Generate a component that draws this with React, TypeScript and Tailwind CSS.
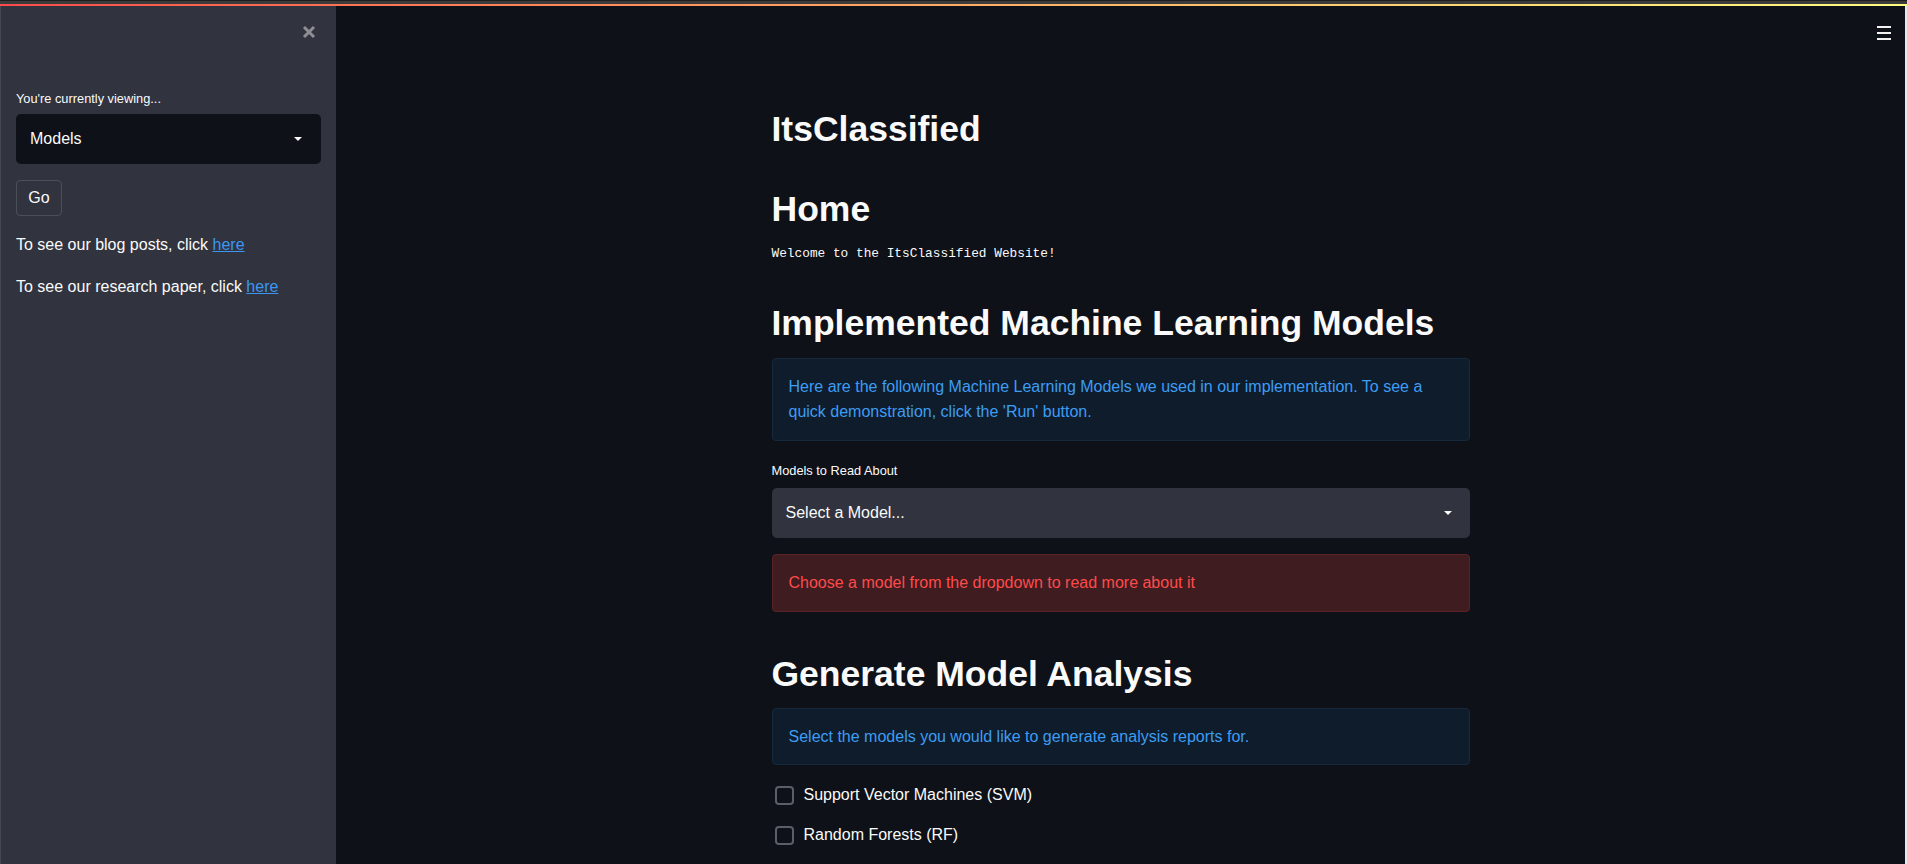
import React from 'react';

function Caret() {
  return (
    <svg width="8" height="4" viewBox="0 0 8 4" className="shrink-0">
      <path d="M0 0h8L4 4z" fill="#fafafa" />
    </svg>
  );
}

function Checkbox({ label }: { label: string }) {
  return (
    <label className="flex items-center h-[25.6px] gap-[10px] cursor-pointer">
      <span className="w-[19px] h-[19px] ml-[3px] rounded-[4px] border-2 border-[#5c5e67] shrink-0" />
      <span className="text-[16px] leading-[25.6px]">{label}</span>
    </label>
  );
}

export default function App() {
  return (
    <div className="h-[864px] w-full flex flex-col overflow-hidden bg-[#0e1117] text-[#fafafa] font-['Liberation_Sans',sans-serif]">
      <div className="h-px bg-[#1e1e1e]" />
      <div className="h-[3px] bg-[#3b3b3b]" />
      <div className="h-[2px] bg-linear-to-r from-[#ff4b4b] to-[#fffd80]" />

      <div className="flex flex-1 min-h-0">
        {/* sidebar */}
        <aside className="w-[336px] shrink-0 bg-[#31333f] border-l border-[#45474f] px-[15px] flex flex-col">
          <div className="flex justify-end mt-[19px] pr-[5px]">
            <svg width="14" height="14" viewBox="0 0 14 14">
              <path d="M2 2l10 10M12 2L2 12" stroke="#8e8f95" strokeWidth="3" strokeLinecap="butt" />
            </svg>
          </div>
          <div className="mt-[49.6px] text-[12.8px] leading-[20.48px]">You're currently viewing...</div>
          <div className="mt-[5px] h-[50px] rounded-[5px] bg-[#0e1117] flex items-center justify-between pl-[14px] pr-[19px]">
            <span className="text-[16px]">Models</span>
            <Caret />
          </div>
          <button className="mt-[16px] w-[46px] h-[36px] rounded-[4px] border border-[#4c4e58] text-[16px] flex items-center justify-center">
            Go
          </button>
          <p className="mt-[16.3px] text-[16px] leading-[25.6px]">
            To see our blog posts, click <a href="#" className="text-[#3a98f2] underline">here</a>
          </p>
          <p className="mt-[16px] text-[16px] leading-[25.6px]">
            To see our research paper, click <a href="#" className="text-[#3a98f2] underline">here</a>
          </p>
        </aside>

        {/* main */}
        <main className="flex-1 relative">
          <div className="absolute top-[20px] right-[14px] w-[14px] flex flex-col gap-[4px]">
            <span className="h-[2px] bg-[#f2f2f2]" />
            <span className="h-[2px] bg-[#f2f2f2]" />
            <span className="h-[2px] bg-[#f2f2f2]" />
          </div>

          <div className="w-[698px] mx-auto pt-[102px] flex flex-col">
            <h1 className="text-[35.5px] leading-[43.2px] font-bold">ItsClassified</h1>
            <h2 className="mt-[36.4px] text-[35.5px] leading-[43.2px] font-bold">Home</h2>
            <div className="mt-[12.8px] text-[12.8px] leading-[20px] font-['Liberation_Mono',monospace]">
              Welcome to the ItsClassified Website!
            </div>

            <h2 className="mt-[38px] text-[35.5px] leading-[43.2px] font-bold">Implemented Machine Learning Models</h2>
            <div className="mt-[13px] rounded-[4px] border border-[#17293d] bg-[#0f1c2b] px-4 py-[15px] text-[16px] leading-[25.6px] text-[#3d9df3]">
              Here are the following Machine Learning Models we used in our implementation. To see a quick
              demonstration, click the 'Run' button.
            </div>

            <div className="mt-[20px] text-[12.8px] leading-[20.48px]">Models to Read About</div>
            <div className="mt-[6.5px] h-[50px] rounded-[5px] bg-[#31333f] flex items-center justify-between pl-[14px] pr-[18px]">
              <span className="text-[16px]">Select a Model...</span>
              <Caret />
            </div>

            <div className="mt-[16px] rounded-[4px] border border-[#5b2328] bg-[#3e1c20] px-4 py-[15px] text-[16px] leading-[25.6px] text-[#ff4b4b]">
              Choose a model from the dropdown to read more about it
            </div>

            <h2 className="mt-[41px] text-[35.5px] leading-[43.2px] font-bold">Generate Model Analysis</h2>
            <div className="mt-[12px] rounded-[4px] border border-[#17293d] bg-[#0f1c2b] px-4 py-[15px] text-[16px] leading-[25.6px] text-[#3d9df3]">
              Select the models you would like to generate analysis reports for.
            </div>

            <div className="mt-[17px] flex flex-col gap-[14.4px]">
              <Checkbox label="Support Vector Machines (SVM)" />
              <Checkbox label="Random Forests (RF)" />
            </div>
          </div>
        </main>

        <div className="w-[2px] shrink-0 bg-[#e6e6e6]" />
      </div>
    </div>
  );
}
